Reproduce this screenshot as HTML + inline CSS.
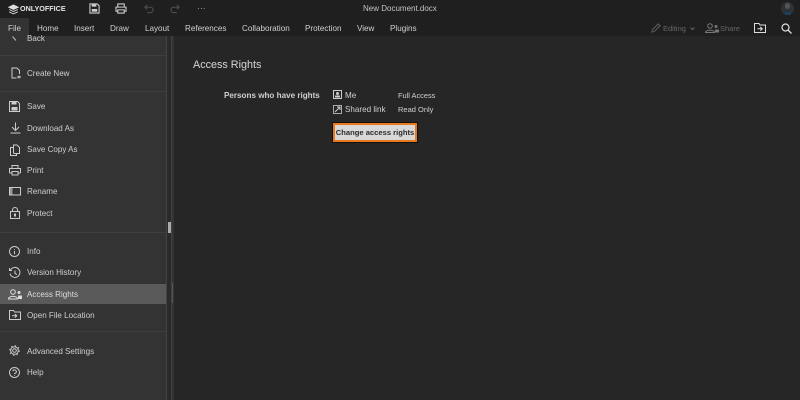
<!DOCTYPE html>
<html><head><meta charset="utf-8"><style>
*{box-sizing:border-box}
html,body{margin:0;padding:0;width:800px;height:400px;overflow:hidden;background:#262626;font-family:"Liberation Sans",sans-serif;color:#d6d6d6}
.abs,.t,.m,.i,.sep{position:absolute}
.t{font-size:8.100px;line-height:12px;white-space:nowrap;color:#d0d0d0}
.m{font-size:8.050px;line-height:12px;white-space:nowrap;color:#cfcfcf;left:27px}
svg{position:absolute;overflow:visible;fill:none;stroke:#cfcfcf;stroke-width:1}
.sep{left:0;width:166px;height:1px;background:#3f3f3f}
</style></head><body>
<div class="abs" style="left:0;top:0;width:800px;height:36px;background:#1f1f1f"></div>
<div class="abs" style="left:0;top:18px;width:29px;height:18px;background:#333"></div>
<div class="abs" style="left:0;top:36px;width:166px;height:364px;background:#333"></div>
<div class="abs" style="left:166px;top:36px;width:6px;height:364px;background:#2a2a2a;border-left:1px solid #444;border-right:1px solid #414141"></div>
<div class="abs" style="left:172px;top:36px;width:2px;height:364px;background:#333"></div>
<div class="abs" style="left:168px;top:222px;width:3px;height:11px;background:#aaa"></div>
<div class="abs" style="left:172px;top:283px;width:1px;height:20px;background:#555"></div>

<svg style="left:8px;top:4px" width="11" height="11" viewBox="0 0 14 12" preserveAspectRatio="none"><path d="M7 1L13 3.500L7 6L1 3.500Z" fill="#ddd" stroke="#ddd"/><path d="M1.500 6L7 8.200L12.500 6M1.500 8.500L7 10.800L12.500 8.500" stroke="#ddd"/></svg>
<div class="t" style="left:20px;top:3px;font-size:7.200px;line-height:12px;font-weight:bold;color:#e4e4e4">ONLYOFFICE</div>

<svg style="left:89px;top:3px" width="11" height="11" viewBox="0 0 12 12"><path d="M1 1H9L11 3V11H1Z" stroke="#ccc" stroke-width="1.200"/><rect x="3" y="1" width="5" height="3" fill="#ccc" stroke="none"/><rect x="3" y="6.500" width="6" height="3" fill="#ccc" stroke="none"/></svg>
<svg style="left:115px;top:3px" width="12" height="11" viewBox="0 0 13 12"><path d="M3 4V1H10V4M3 9H1V4.500H12V9H10M3 7.500H10V11H3Z" stroke="#ccc" stroke-width="1.200"/></svg>
<svg style="left:144px;top:4px" width="10" height="10" viewBox="0 0 11 11"><path d="M3.500 1L1 3.500L3.500 6M1 3.500H7A3 3 0 0 1 7 9.500H3.500" stroke="#555"/></svg>
<svg style="left:170px;top:4px" width="10" height="10" viewBox="0 0 11 11"><path d="M7.500 1L10 3.500L7.500 6M10 3.500H4A3 3 0 0 0 4 9.500H7.500" stroke="#555"/></svg>
<div class="t" style="left:197px;top:3px;font-size:8px;letter-spacing:.3px;color:#bbb">···</div>
<div class="t" style="left:363px;top:3px;font-size:8px;color:#c4c4c4">New Document.docx</div>

<div class="t" style="left:8px;top:23px">File</div>
<div class="t" style="left:37px;top:23px">Home</div>
<div class="t" style="left:74px;top:23px">Insert</div>
<div class="t" style="left:110px;top:23px">Draw</div>
<div class="t" style="left:145px;top:23px">Layout</div>
<div class="t" style="left:185px;top:23px">References</div>
<div class="t" style="left:242px;top:23px">Collaboration</div>
<div class="t" style="left:305px;top:23px">Protection</div>
<div class="t" style="left:357px;top:23px">View</div>
<div class="t" style="left:390px;top:23px">Plugins</div>

<svg style="left:651px;top:23px" width="10" height="10" viewBox="0 0 11 11"><path d="M1 10L1.500 7.500L8 1L10 3L3.500 9.500Z" stroke="#666"/></svg>
<div class="t" style="left:663px;top:23px;font-size:7.500px;color:#666">Editing</div>
<svg style="left:690px;top:27px" width="5" height="4" viewBox="0 0 5 4"><path d="M.5 .5L2.500 2.500L4.500 .5" stroke="#666"/></svg>
<svg style="left:705px;top:23px" width="14" height="10" viewBox="0 0 14 10"><circle cx="5" cy="3" r="2.300" stroke="#777"/><path d="M.5 9.500C.5 6.500 9.500 6.500 9.500 9.500Z" stroke="#777"/><circle cx="11" cy="3.500" r="1.500" fill="#777" stroke="none"/><rect x="10" y="6.500" width="4" height="3" fill="#777" stroke="none"/></svg>
<div class="t" style="left:720px;top:23px;font-size:7.500px;color:#666">Share</div>
<svg style="left:754px;top:23px" width="12" height="10" viewBox="0 0 12 10"><path d="M.5 9.500V.5H5L6 2H11.500V9.500Z" stroke="#ddd"/><path d="M3.500 5.800H8M6.300 4L8.300 5.800L6.300 7.600" stroke="#ddd"/></svg>
<svg style="left:781px;top:23px" width="11" height="11" viewBox="0 0 11 11"><circle cx="4.500" cy="4.500" r="3.500" stroke="#ddd" stroke-width="1.200"/><path d="M7 7L10.500 10.500" stroke="#ddd" stroke-width="1.300"/></svg>
<div class="abs" style="left:781px;top:2px;width:13px;height:13px;border-radius:50%;background:#2c3238"></div>
<div class="abs" style="left:785px;top:3px;width:5px;height:6px;border-radius:50%;background:#555"></div>
<div class="abs" style="left:785px;top:12px;width:6px;height:3px;background:#1c3f5f"></div>

<div class="abs" style="left:0;top:36px;width:166px;height:19px;background:#333"></div>
<svg style="left:12px;top:36px" width="6" height="7" viewBox="0 0 6 7"><path d="M.5 .5L4 4.500" stroke="#bbb"/></svg>
<div class="m" style="top:33px">Back</div>
<div class="sep" style="top:55px"></div>

<svg style="left:11px;top:67px" width="10" height="12" viewBox="0 0 10 12"><path d="M5.500 11H1V1H6L8.500 3.500V7" stroke="#ccc"/><path d="M6 10H10M8 8.500V11.500" stroke="#ccc"/></svg>
<div class="m" style="top:68px">Create New</div>
<div class="sep" style="top:91px"></div>

<svg style="left:9px;top:101px" width="11" height="11" viewBox="0 0 11 11"><path d="M.5 .5H8.500L10.500 2.500V10.500H.5Z" stroke="#ccc"/><rect x="2.500" y="1" width="5" height="2.500" fill="#ccc" stroke="none"/><rect x="2.500" y="6" width="6" height="3.500" fill="#ccc" stroke="none"/></svg>
<div class="m" style="top:101px">Save</div>
<svg style="left:10px;top:122px" width="11" height="12" viewBox="0 0 11 12"><path d="M5.500 .5V8M2 5L5.500 8.500L9 5M.5 11H10.500" stroke="#ccc"/></svg>
<div class="m" style="top:123px">Download As</div>
<svg style="left:10px;top:144px" width="10" height="12" viewBox="0 0 10 12"><path d="M3.500 9V1H7L9.500 3.500V9.500H3.500M3.500 3.500H.5V11.500H6.500V9.500" stroke="#ccc"/></svg>
<div class="m" style="top:144px">Save Copy As</div>
<svg style="left:9px;top:165px" width="12" height="11" viewBox="0 0 12 11"><path d="M3 3V.5H9V3M3 8H1A.5.5 0 0 1 .5 7.500V3.500H11.500V7.500A.5.5 0 0 1 11 8H9M3 6.500H9V10H3Z" stroke="#ccc"/></svg>
<div class="m" style="top:165px">Print</div>
<svg style="left:9px;top:187px" width="12" height="9" viewBox="0 0 12 9"><rect x=".5" y=".5" width="11" height="7.500" stroke="#ccc"/><rect x="1" y="1" width="2.500" height="6.500" fill="#999" stroke="none"/></svg>
<div class="m" style="top:186px">Rename</div>
<svg style="left:10px;top:207px" width="10" height="12" viewBox="0 0 10 12"><rect x=".5" y="4.500" width="9" height="7" stroke="#ccc"/><path d="M2.500 4.500V3A2.500 2.500 0 0 1 7.500 3V4.500" stroke="#ccc"/><rect x="4" y="6.500" width="2" height="3" fill="#ccc" stroke="none"/></svg>
<div class="m" style="top:208px">Protect</div>
<div class="sep" style="top:232px"></div>

<svg style="left:9px;top:246px" width="11" height="11" viewBox="0 0 11 11"><circle cx="5.500" cy="5.500" r="5" stroke="#ccc"/><path d="M5.500 3V3.800M5.500 5V8.200" stroke="#ccc"/></svg>
<div class="m" style="top:246px">Info</div>
<svg style="left:9px;top:267px" width="12" height="12" viewBox="0 0 12 12"><path d="M1.500 3A5 5 0 1 1 1 6.500M.5 1V3.500H3M6 3.500V6.500L8 7.500" stroke="#ccc"/></svg>
<div class="m" style="top:267px">Version History</div>
<div class="abs" style="left:0;top:284px;width:166px;height:20px;background:#5a5a5a"></div>
<svg style="left:8px;top:289px" width="14" height="11" viewBox="0 0 14 11"><circle cx="5" cy="3" r="2.300" stroke="#ddd"/><path d="M.5 10C.5 6.500 9.500 6.500 9.500 10Z" stroke="#ddd"/><circle cx="11" cy="3.500" r="1.500" fill="#ddd" stroke="none"/><rect x="10" y="6.500" width="4" height="3.500" fill="#ddd" stroke="none"/></svg>
<div class="m" style="top:289px;color:#ddd">Access Rights</div>
<svg style="left:9px;top:310px" width="12" height="10" viewBox="0 0 12 10"><path d="M.5 9.500V.5H4.500L5.500 2H11.500V9.500Z" stroke="#ccc"/><path d="M3 5.800H7.500M5.800 4L7.800 5.800L5.800 7.600" stroke="#ccc"/></svg>
<div class="m" style="top:310px">Open File Location</div>
<div class="sep" style="top:331px"></div>

<svg style="left:9px;top:345px" width="11" height="11" viewBox="0 0 11 11"><circle cx="5.500" cy="5.500" r="1.800" stroke="#ccc"/><circle cx="5.500" cy="5.500" r="3.800" stroke="#ccc"/><circle cx="5.500" cy="5.500" r="4.800" stroke="#ccc" stroke-dasharray="1.500 2.270"/></svg>
<div class="m" style="top:346px">Advanced Settings</div>
<svg style="left:9px;top:367px" width="11" height="11" viewBox="0 0 11 11"><circle cx="5.500" cy="5.500" r="5" stroke="#ccc"/><path d="M3.800 4.200A1.800 1.800 0 1 1 5.500 6.500V7M5.500 8V8.800" stroke="#ccc"/></svg>
<div class="m" style="top:367px">Help</div>

<div class="t" style="left:193px;top:58px;font-size:10.800px;line-height:15px;color:#d6d6d6">Access Rights</div>
<div class="t" style="left:224px;top:90px;font-size:8.100px;font-weight:bold;color:#cfcfcf">Persons who have rights</div>
<svg style="left:333px;top:90px" width="9" height="9" viewBox="0 0 9 9"><rect x=".5" y=".5" width="8" height="8" stroke="#ccc"/><circle cx="4.500" cy="3.500" r="1.500" fill="#ccc" stroke="none"/><rect x="2" y="5.500" width="5" height="2" fill="#ccc" stroke="none"/></svg>
<div class="t" style="left:345px;top:90px;font-size:8.100px">Me</div>
<div class="t" style="left:398px;top:90px;font-size:7.400px">Full Access</div>
<svg style="left:333px;top:105px" width="9" height="9" viewBox="0 0 9 9"><rect x=".5" y=".5" width="8" height="8" stroke="#aaa"/><path d="M2 7L7 2M4 2H7V5" stroke="#ccc"/></svg>
<div class="t" style="left:345px;top:104px;font-size:8.100px">Shared link</div>
<div class="t" style="left:398px;top:104px;font-size:7.500px">Read Only</div>
<div class="abs" style="left:333px;top:123px;width:84px;height:19px;background:#d8d8d8;border:2px solid #e8791c;box-shadow:0 0 0 1px #111;text-align:center;font-size:7.600px;line-height:16px;font-weight:bold;color:#2a2a2a;white-space:nowrap">Change access rights</div>
</body></html>
